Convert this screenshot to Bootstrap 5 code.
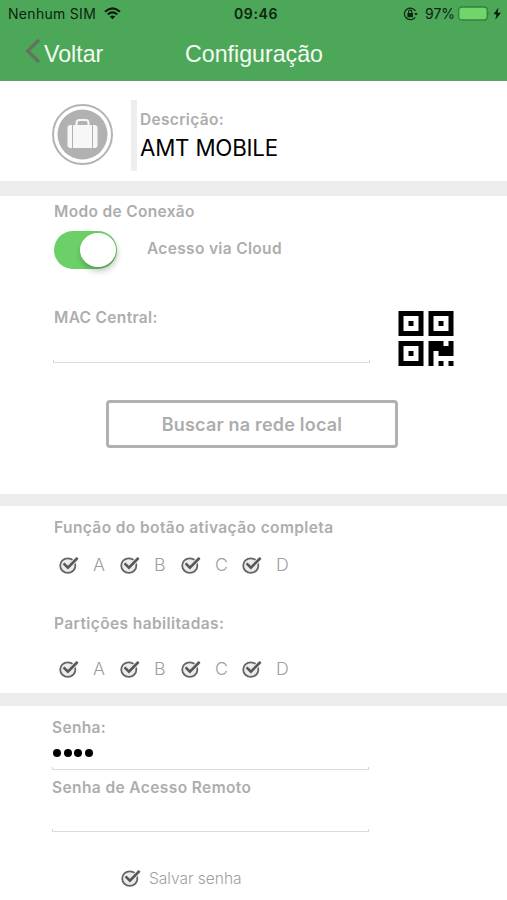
<!DOCTYPE html>
<html lang="pt-BR">
<head>
<meta charset="utf-8">
<meta name="viewport" content="width=device-width, initial-scale=1">
<title>Configuração</title>
<link href="https://cdn.jsdelivr.net/npm/bootstrap@5.3.0/dist/css/bootstrap.min.css" rel="stylesheet">
<style>
body{font-family:Inter,"Liberation Sans",sans-serif;color:#000;background:#fff;width:507px;height:900px;overflow:hidden}
svg{display:block;flex:none}
.top-area{height:81px;background:#4da758;border-bottom:1px solid #5f9c66}
.status-row{height:27px;font-size:14px;line-height:27px;color:#0c2410;padding-left:8px}
.status-row>div{white-space:nowrap}
.status-left{width:226px;letter-spacing:.3px}
.status-time{width:169px;font-weight:600;letter-spacing:.6px}
.status-pct{margin-left:7px}
.battery{margin-left:3px}
.title-row{height:53px;font:23.2px/54px "Liberation Sans",sans-serif;color:#f3fbf3;padding-left:25px}
.back-link{width:160px}
.desc-area{height:100px;padding-left:52px}
.v-rule{width:6px;height:71px;background:#eee;margin:3px 3px 0 17px}
.field-label{font-size:15.5px;font-weight:600;line-height:20px;color:#adadad;letter-spacing:.33px;white-space:nowrap}
.wide-label{letter-spacing:.4px}
.desc-label{margin-top:1px}
.desc-value{font-size:22.3px;line-height:28px;letter-spacing:-.2px;margin-top:4px}
.gap-band{background:#ededed}
.conn-area{height:298px;padding:6px 0 0 54px}
.toggle-row{height:39px;margin-top:9px}
.toggle-track{width:63px;height:38px;border-radius:19px;background:#6bd068;padding:2px 1px}
.toggle-knob{width:36px;height:34px;border-radius:50%;background:#fff;box-shadow:1px 4px 6px rgba(0,0,0,.24)}
.toggle-text{margin:8px 0 0 30px}
.mac-row{height:67px;margin-top:33px}
.mac-label{margin-top:5px}
.qr{margin-top:8px}
.line-input{width:317px;margin-left:-1px;border:solid #dcdcdc;border-width:0 0 1px;background:linear-gradient(#d4d4d4,#d4d4d4) 0 100%/1px 2px no-repeat,linear-gradient(#d4d4d4,#d4d4d4) 100% 100%/1px 2px no-repeat}
.search-btn{width:292px;height:48px;border:3px solid #b1b1b1;border-radius:4px;color:#adadad;font-size:18px;font-weight:600;letter-spacing:.2px;margin:30px 0 0 52px;padding:0}
.parts-area{height:187px;padding:12px 0 0 54px}
.check-row{height:24px;margin-top:15px;padding-left:5px;font-size:17.8px;font-weight:300;color:#a0a0a0}
.check-item{width:61px;gap:14px}
.parts-label{margin-top:37px}
.parts-row{margin-top:23px}
.pass-area{padding:12px 0 0 52px}
.pass-area .line-input{margin-left:0}
.dots{height:19px;gap:2.6px;padding-left:1px}
.dots i{width:8px;height:8px;border-radius:50%;background:#000}
.save-row{font-size:15.6px;font-weight:300;color:#a0a0a0;margin:34px 0 0 69px;gap:8px;letter-spacing:-.05px}
.save-text{padding-top:1px}
</style>
</head>
<body>
<svg width="0" height="0" class="position-absolute"><defs>
<symbol id="check" viewBox="0 0 20 18"><ellipse cx="8.8" cy="9.6" rx="7.6" ry="7.3" fill="#ececec" stroke="#656565" stroke-width="1.8"/><path d="M5.2 7.9 9 11.8 18 2.2" fill="none" stroke="#e8e8e8" stroke-width="4.4"/><path d="M4.6 7.4 8.9 11.7 18.6 1.8" fill="none" stroke="#555" stroke-width="2.5"/></symbol>
</defs></svg>
<header class="top-area">
  <div class="status-row d-flex">
    <div class="status-left d-flex align-items-center"><span>Nenhum SIM</span>
      <svg class="ms-2" width="17" height="13" viewBox="0 0 17 13" fill="none" stroke="#071b0a" stroke-width="2.1"><path d="M1 4.7Q8.5-1.9 16 4.7M3.7 7.5Q8.5 3.2 13.3 7.5"/><path d="M5.8 9.5Q8.5 7.3 11.2 9.5L8.5 12.3Z" fill="#071b0a" stroke="none"/></svg>
    </div>
    <div class="status-time">09:46</div>
    <div class="d-flex align-items-center">
      <svg width="15" height="14" viewBox="0 0 15 14"><path d="M12.5 4A6 5.7 0 1 0 12.2 10.3M13 6.5V8" fill="none" stroke="#0c2410" stroke-width="1.2"/><path d="M11.2 6h3.4L13 8.5Z" fill="#0c2410"/><rect x="4.4" y="6" width="5.6" height="4.2" fill="#0c2410"/><path d="M5.6 6V4.7a1.6 1.6 0 0 1 3.2 0V6" fill="none" stroke="#0c2410" stroke-width="1.1"/></svg>
      <span class="status-pct">97%</span>
      <svg class="battery" width="44" height="15" viewBox="0 0 44 15"><rect x=".7" y="1" width="28.5" height="13" rx="3" fill="#70d66b" stroke="#358140" stroke-width="1.3"/><path d="M30.6 5.5q2 2 0 4z" fill="#358140"/><path d="M40.5 1.5 35.5 8.3h3L37.3 13.8 43 6.7H39.6Z" fill="#071b0a"/></svg>
    </div>
  </div>
  <div class="title-row d-flex">
    <div class="back-link d-flex"><svg class="mt-2" width="15" height="30" viewBox="0 0 15 30"><path d="M14 5 2.5 16 14 27" fill="none" stroke="#64715f" stroke-width="3.2"/></svg><span class="ms-1">Voltar</span></div>
    <div>Configuração</div>
  </div>
</header>
<main>
  <section class="desc-area d-flex align-items-center">
    <svg width="62" height="62" viewBox="0 0 62 62" class="mt-2"><circle cx="30.5" cy="30.5" r="29.5" fill="#fff" stroke="#b3b3b3" stroke-width="2"/><circle cx="30.5" cy="30.5" r="25" fill="#b1b1b1"/><path d="M24.5 21v-2q0-3 3-3h6q3 0 3 3v2" fill="none" stroke="#f7f7f7" stroke-width="2"/><rect x="15.5" y="21" width="30" height="23" rx="3" fill="#f7f7f7"/><path d="M20.5 21v23M40.5 21v23" stroke="#b1b1b1" stroke-width="1"/></svg>
    <div class="v-rule mt-2"></div>
    <div class="mt-2"><div class="field-label desc-label">Descrição:</div><div class="desc-value">AMT MOBILE</div></div>
  </section>
  <div class="gap-band" style="height:15px"></div>
  <section class="conn-area">
    <div class="field-label">Modo de Conexão</div>
    <div class="toggle-row d-flex"><div class="toggle-track d-flex justify-content-end"><div class="toggle-knob"></div></div><div class="field-label toggle-text">Acesso via Cloud</div></div>
    <div class="mac-row d-flex"><div><div class="field-label mac-label">MAC Central:</div><div class="line-input" style="height:35px"></div></div>
      <svg class="qr ms-4" width="60" height="56" viewBox="-.8 0 11.8 11.2"><path fill-rule="evenodd" d="M0 0h5v5H0zM1 1v3h3V1zM2 2h1v1H2zM6 0h5v5H6zM7 1v3h3V1zM8 2h1v1H8zM0 6h5v5H0zM1 7v3h3V7zM2 8h1v1H2zM6 6h3v1h1V6h1v3H8V8H7v3H6zM8 10h1v1H8zM10 10h1v1h-1z"/></svg></div>
    <button class="search-btn btn d-block">Buscar na rede local</button>
  </section>
  <div class="gap-band" style="height:12px"></div>
  <section class="parts-area">
    <div class="field-label wide-label">Função do botão ativação completa</div>
    <div class="check-row d-flex">
      <div class="check-item d-flex align-items-center"><svg width="20" height="18"><use href="#check"/></svg>A</div>
      <div class="check-item d-flex align-items-center"><svg width="20" height="18"><use href="#check"/></svg>B</div>
      <div class="check-item d-flex align-items-center"><svg width="20" height="18"><use href="#check"/></svg>C</div>
      <div class="check-item d-flex align-items-center"><svg width="20" height="18"><use href="#check"/></svg>D</div>
    </div>
    <div class="field-label wide-label parts-label">Partições habilitadas:</div>
    <div class="check-row parts-row d-flex">
      <div class="check-item d-flex align-items-center"><svg width="20" height="18"><use href="#check"/></svg>A</div>
      <div class="check-item d-flex align-items-center"><svg width="20" height="18"><use href="#check"/></svg>B</div>
      <div class="check-item d-flex align-items-center"><svg width="20" height="18"><use href="#check"/></svg>C</div>
      <div class="check-item d-flex align-items-center"><svg width="20" height="18"><use href="#check"/></svg>D</div>
    </div>
  </section>
  <div class="gap-band" style="height:13px"></div>
  <section class="pass-area">
    <div class="field-label">Senha:</div>
    <div class="line-input" style="height:32px"><div class="dots d-flex align-items-end"><i></i><i></i><i></i><i></i></div></div>
    <div class="field-label wide-label mt-2">Senha de Acesso Remoto</div>
    <div class="line-input" style="height:34px"></div>
    <div class="save-row d-flex align-items-center"><svg width="20" height="18"><use href="#check"/></svg><span class="save-text">Salvar senha</span></div>
  </section>
</main>
<script src="https://cdn.jsdelivr.net/npm/bootstrap@5.3.0/dist/js/bootstrap.bundle.min.js"></script>
</body>
</html>
